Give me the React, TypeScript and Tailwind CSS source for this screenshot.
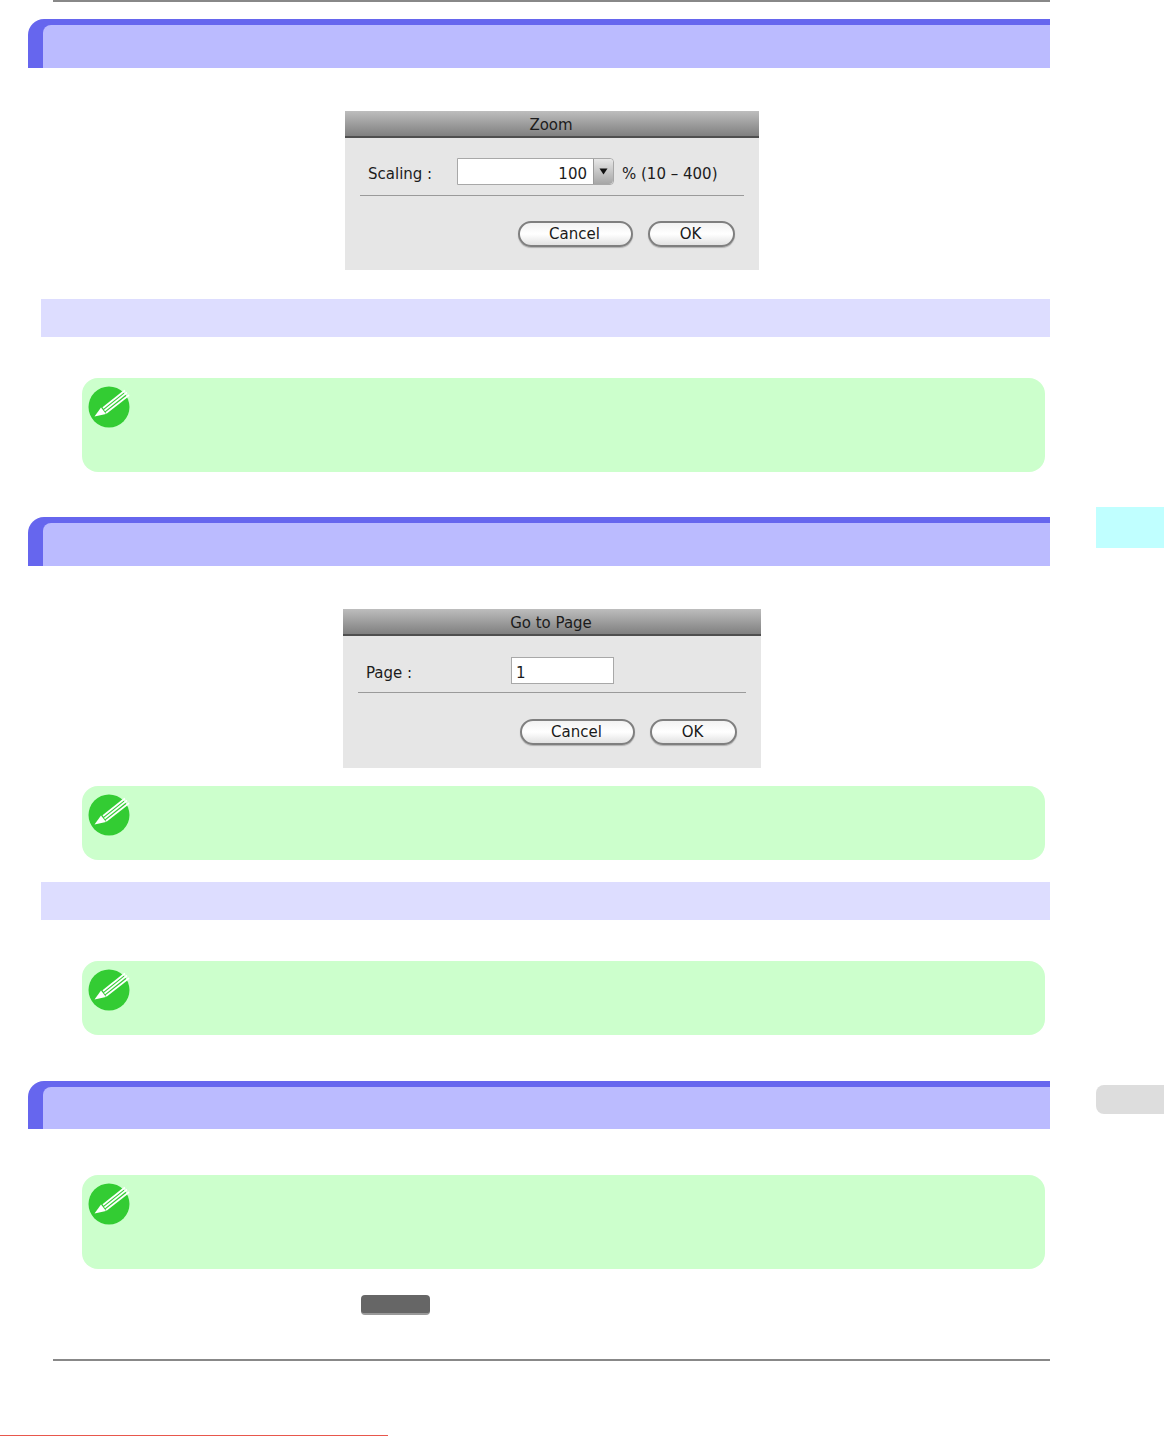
function Heading({ className = "" }: { className?: string }) {
  return (
    <div className={`h-[49px] rounded-tl-[16px] bg-[#6666ee] pt-[6px] pl-[15px] ${className}`}>
      <div className="h-full rounded-tl-[8px] bg-[#bbbbff]" />
    </div>
  );
}

function SubHeading({ className = "" }: { className?: string }) {
  return <div className={`ml-[13px] h-[38px] bg-[#ddddff] ${className}`} />;
}

function NoteIcon() {
  return (
    <svg width="44" height="44" viewBox="0 0 44 44" className="block">
      <circle cx="21" cy="23" r="20.5" fill="#33cc33" />
      <path d="M6.5 32.5 L13 23.5 L18 30 Z" fill="#ffffff" />
      <g stroke="#ffffff" strokeWidth="1.7">
        <path d="M15 24 L37 6.5" />
        <path d="M16.5 26.5 L39 8.5" />
        <path d="M18 29 L41 11" />
      </g>
    </svg>
  );
}

function Note({ className = "" }: { className?: string }) {
  return (
    <div className={`ml-[54px] w-[963px] rounded-[16px] bg-[#ccffcc] pl-[6px] pt-[6px] ${className}`}>
      <NoteIcon />
    </div>
  );
}

function MacButton({ label, className = "" }: { label: string; className?: string }) {
  return (
    <div
      className={`flex h-[26px] items-center justify-center rounded-full border-2 border-[#7f7f7f] bg-gradient-to-b from-[#f2f2f2] via-[#ffffff] to-[#e2e2e2] pr-[2px] text-[15px] text-[#1a1a1a] shadow-[0_1px_1px_#b0b0b0] ${className}`}
    >
      {label}
    </div>
  );
}

function DialogShell({
  title,
  width,
  children,
}: {
  title: string;
  width: string;
  children: React.ReactNode;
}) {
  return (
    <div className={`flex h-[159px] flex-col bg-[#e6e6e6] ${width}`}>
      <div className="flex h-[27px] items-center justify-center border-b-2 border-[#4f4f4f] bg-gradient-to-b from-[#bdbdbd] to-[#808080] pt-[3px] pr-[2px] text-[15px] text-[#1c1c1c]">
        {title}
      </div>
      {children}
    </div>
  );
}

function ZoomDialog() {
  return (
    <DialogShell title="Zoom" width="ml-[317px] w-[414px]">
      <div className="mx-[15px] mt-[20px] flex h-[38px] items-start border-b border-[#9a9a9a] text-[15px] text-[#1c1c1c]">
        <span className="ml-[8px] mt-[5px] w-[89px]">Scaling :</span>
        <div className="flex h-[27px] w-[157px] rounded-r-[4px] border border-[#a8a8a8] bg-white">
          <span className="flex-1 pr-[6px] text-right leading-[31px]">100</span>
          <div className="flex w-[20px] items-center justify-center rounded-r-[4px] border-l border-[#9a9a9a] bg-gradient-to-b from-[#e8e8e8] to-[#a6a6a6]">
            <svg width="9" height="7" viewBox="0 0 9 7">
              <path d="M0.5 0.5 H8.5 L4.5 6.5 Z" fill="#111111" />
            </svg>
          </div>
        </div>
        <span className="ml-[8px] mt-[5px]">% (10 – 400)</span>
      </div>
      <div className="mt-[25px] flex justify-end gap-[15px] pr-[24px]">
        <MacButton label="Cancel" className="w-[115px]" />
        <MacButton label="OK" className="w-[87px]" />
      </div>
    </DialogShell>
  );
}

function PageDialog() {
  return (
    <DialogShell title="Go to Page" width="ml-[315px] w-[418px]">
      <div className="mx-[15px] mt-[21px] flex h-[36px] items-start border-b border-[#9a9a9a] text-[15px] text-[#1c1c1c]">
        <span className="ml-[8px] mt-[5px] w-[145px]">Page :</span>
        <div className="h-[27px] w-[103px] border border-[#a8a8a8] bg-white pl-[4px] leading-[30px]">1</div>
      </div>
      <div className="mt-[26px] flex justify-end gap-[15px] pr-[24px]">
        <MacButton label="Cancel" className="w-[115px]" />
        <MacButton label="OK" className="w-[87px]" />
      </div>
    </DialogShell>
  );
}

export default function App() {
  return (
    <div className="flex h-[1436px] w-[1164px] flex-col overflow-hidden bg-white font-['DejaVu_Sans',sans-serif]">
      <div className="flex h-[1435px]">
        {/* Page content */}
        <div className="w-[1050px] shrink-0 pl-[28px]">
          <div className="ml-[25px] h-[2px] bg-[#888888]" />
          <Heading className="mt-[17px]" />
          <div className="mt-[43px]">
            <ZoomDialog />
          </div>
          <SubHeading className="mt-[29px]" />
          <Note className="mt-[41px] h-[94px]" />
          <Heading className="mt-[45px]" />
          <div className="mt-[43px]">
            <PageDialog />
          </div>
          <Note className="mt-[18px] h-[74px]" />
          <SubHeading className="mt-[22px]" />
          <Note className="mt-[41px] h-[74px]" />
          <Heading className="mt-[46px] !h-[48px]" />
          <Note className="mt-[46px] h-[94px]" />
          <div className="ml-[333px] mt-[26px] h-[20px] w-[69px] rounded-[4px] border-b-2 border-[#999999] bg-[#666666]" />
          <div className="ml-[25px] mt-[44px] h-[2px] bg-[#888888]" />
        </div>

        {/* Chapter tabs */}
        <div className="ml-[46px] flex-1">
          <div className="mt-[507px] h-[41px] bg-[#c0ffff]" />
          <div className="mt-[537px] h-[29px] rounded-l-[8px] bg-[#dddddd]" />
        </div>
      </div>
      <div className="h-px w-[388px] bg-[#e8574c]" />
    </div>
  );
}
